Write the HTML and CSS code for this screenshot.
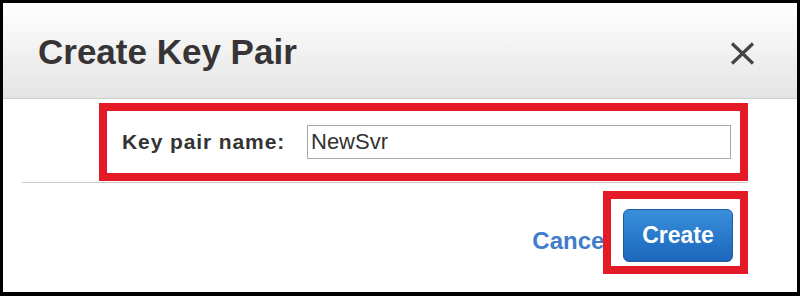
FILE: index.html
```html
<!DOCTYPE html>
<html lang="en">
<head>
    <meta charset="UTF-8">
    <meta name="viewport" content="width=device-width, initial-scale=1.0">
    <title>Create Key Pair</title>
    <link rel="stylesheet" href="styles.css">
</head>
<body>
    <div class="dialog">
        <!-- Header -->
        <div class="dialog-header">
            <h1 class="dialog-title">Create Key Pair</h1>
            <button class="close-btn" aria-label="Close">
                <svg width="25" height="23" viewBox="0 0 25 23">
                    <path d="M2 1.5 L23 21.5 M23 1.5 L2 21.5" stroke="#444" stroke-width="3.2" fill="none"/>
                </svg>
            </button>
        </div>

        <!-- Key pair name field -->
        <div class="highlight name-box">
            <label class="field-label" for="keyName">Key pair name:</label>
            <input id="keyName" class="field-input" type="text" value="NewSvr">
        </div>
        <div class="divider"></div>

        <!-- Footer buttons -->
        <div class="dialog-footer">
            <a class="cancel-link" href="#">Cancel</a>
            <div class="highlight create-box">
                <button class="create-btn">Create</button>
            </div>
        </div>
    </div>
</body>
</html>
```

FILE: styles.css
```css
body {
    margin: 0;
    background-color: #000;
    font-family: "Liberation Sans", Arial, sans-serif;
}

.dialog {
    box-sizing: border-box;
    width: 800px;
    height: 296px;
    border-style: solid;
    border-color: #000;
    border-width: 3px 3px 4px 3px;
    background-color: #fff;
}

/* Header */
.dialog-header {
    display: flex;
    align-items: center;
    justify-content: space-between;
    height: 96px;
    box-sizing: border-box;
    padding: 2px 42px 0 35px;
    background: linear-gradient(#ffffff, #e4e4e4);
    border-bottom: 1px solid #cfcfcf;
}
.dialog-title {
    margin: 0;
    font-size: 35px;
    font-weight: bold;
    color: #363434;
}
.close-btn {
    display: flex;
    padding: 0;
    margin-top: 4px;
    border: none;
    background: none;
    cursor: pointer;
}

/* Red highlight boxes */
.highlight {
    border: 8px solid #e41b26;
    background-color: #fff;
}
.name-box {
    display: flex;
    align-items: center;
    width: 649px;
    height: 78px;
    box-sizing: border-box;
    margin: 4px 0 0 96px;
    padding: 0 9px 0 15px;
}
.field-label {
    font-size: 21px;
    font-weight: bold;
    letter-spacing: 0.9px;
    color: #333;
}
.field-input {
    box-sizing: border-box;
    width: 424px;
    height: 34px;
    margin-left: auto;
    padding: 0 3px;
    border: 1px solid #a8a8a8;
    font-family: "Liberation Sans", Arial, sans-serif;
    font-size: 22px;
    color: #333;
    outline: none;
}
.divider {
    height: 1px;
    margin: 1px 49px 0 19px;
    background-color: #cccccc;
}

/* Footer */
.dialog-footer {
    display: flex;
    justify-content: flex-end;
    margin: 8px 49px 0 0;
}
.cancel-link {
    align-self: flex-end;
    margin: 0 -8px 19px 0;
    font-size: 24px;
    font-weight: bold;
    color: #3f7ccc;
    text-decoration: none;
}
.create-box {
    position: relative;
    z-index: 1;
    width: 145px;
    height: 83px;
    box-sizing: border-box;
    padding: 10px 7px 4px 12px;
}
.create-btn {
    width: 110px;
    height: 53px;
    border: 1px solid #1d5ca6;
    border-radius: 6px;
    background: linear-gradient(#3a8fdc, #1b66bb);
    color: #fff;
    font-family: "Liberation Sans", Arial, sans-serif;
    font-size: 23px;
    font-weight: bold;
    cursor: pointer;
}
```
